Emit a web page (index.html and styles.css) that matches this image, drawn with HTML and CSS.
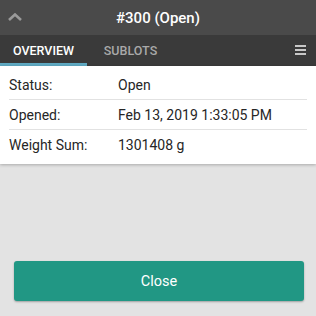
FILE: index.html
```html
<!DOCTYPE html>
<html lang="en">
<head>
<meta charset="UTF-8">
<meta name="viewport" content="width=device-width, initial-scale=1.0">
<title>#300 (Open)</title>
<link rel="stylesheet" href="styles.css">
</head>
<body>
<div class="page">
  <div class="header">
    <span class="back">
      <svg width="14" height="8" viewBox="0 0 14 8"><path d="M1 7 L7 1.5 L13 7" fill="none" stroke="#9a9a9a" stroke-width="2.6"/></svg>
    </span>
    <h1 class="title">#300 (Open)</h1>
  </div>

  <!-- вкладки -->
  <div class="tabs">
    <div class="tab active">Overview</div>
    <div class="tab">Sublots</div>
    <div class="menu">
      <span></span><span></span><span></span>
    </div>
  </div>

  <div class="details">
    <div class="row"><span class="label">Status:</span><span class="value">Open</span></div>
    <div class="row"><span class="label">Opened:</span><span class="value">Feb 13, 2019 1:33:05 PM</span></div>
    <div class="row"><span class="label">Weight Sum:</span><span class="value">1301408 g</span></div>
  </div>

  <div class="spacer"></div>

  <div class="footer">
    <button class="close-btn">Close</button>
  </div>
</div>
</body>
</html>
```

FILE: styles.css
```css
* {
    box-sizing: border-box;
}

html, body {
    margin: 0;
    height: 100%;
}

body {
    background-color: #e3e3e3;
    font-family: Roboto, "Liberation Sans", sans-serif;
}

.page {
    display: flex;
    flex-direction: column;
    height: 316px;
}

.header {
    height: 35px;
    background-color: #4a4a4a;
    display: flex;
    align-items: center;
    justify-content: center;
    position: relative;
}

.back {
    position: absolute;
    left: 8px;
    top: 13px;
    display: flex;
}

.title {
    margin: 0;
    color: #fff;
    font-size: 15px;
    font-weight: 500;
}

.tabs {
    height: 31px;
    background-color: #3a3a3a;
    display: flex;
    align-items: stretch;
}

.tab {
    width: 87px;
    display: flex;
    align-items: center;
    justify-content: center;
    padding-top: 2px;
    text-transform: uppercase;
    font-size: 12.5px;
    font-weight: 500;
    color: #a9a9a9;
    border-bottom: 3px solid transparent;
}

.tab.active {
    color: #fff;
    border-bottom-color: #5fa9c2;
}

.menu {
    margin-left: auto;
    margin-right: 10px;
    display: flex;
    flex-direction: column;
    justify-content: center;
    gap: 2px;
    padding-bottom: 2px;
}

.menu span {
    display: block;
    width: 11px;
    height: 2px;
    background-color: #c8c8c8;
}

.details {
    background-color: #fff;
    padding: 4px 9px 4px 9px;
    box-shadow: 0 1px 3px rgba(0, 0, 0, 0.25);
}

.row {
    display: flex;
    height: 30px;
    align-items: center;
    font-size: 14px;
    color: #262626;
    border-bottom: 1px solid #e2e2e2;
}

.row:last-child {
    border-bottom: none;
}

.label {
    width: 109px;
}

.spacer {
    flex: 1;
}

.footer {
    padding: 0 12px 15px 14px;
}

.close-btn {
    width: 100%;
    height: 40px;
    border: none;
    border-radius: 3px;
    background-color: #219784;
    color: #fff;
    font-family: Roboto, "Liberation Sans", sans-serif;
    font-size: 14.5px;
    box-shadow: 0 1px 2px rgba(0, 0, 0, 0.3);
}
```
